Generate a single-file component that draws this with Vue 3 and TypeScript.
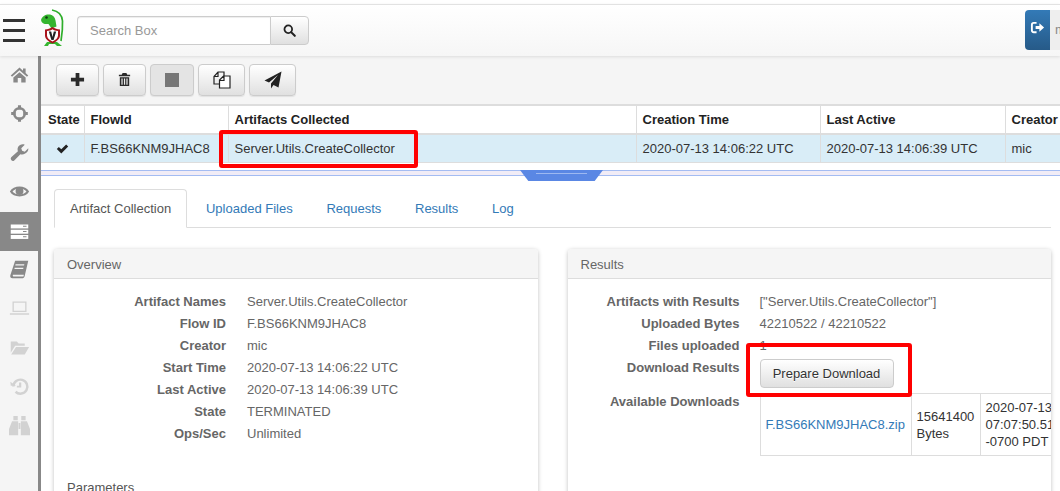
<script setup lang="ts">
const columns: string[] = ['State', 'FlowId', 'Artifacts Collected', 'Creation Time', 'Last Active', 'Creator']
const tabs: string[] = ['Uploaded Files', 'Requests', 'Results', 'Log']
const overview: [string, string][] = [
  ['Artifact Names', 'Server.Utils.CreateCollector'],
  ['Flow ID', 'F.BS66KNM9JHAC8'],
  ['Creator', 'mic'],
  ['Start Time', '2020-07-13 14:06:22 UTC'],
  ['Last Active', '2020-07-13 14:06:39 UTC'],
  ['State', 'TERMINATED'],
  ['Ops/Sec', 'Unlimited'],
]
const results: [string, string][] = [
  ['Artifacts with Results', '["Server.Utils.CreateCollector"]'],
  ['Uploaded Bytes', '42210522 / 42210522'],
  ['Files uploaded', '1'],
]
</script>

<template>
  <div class="app">
    <header class="nav">
      <div class="burger"><i></i><i></i><i></i></div>
      <svg class="logo" viewBox="0 0 24 38">
        <path d="M12 1c6 1 10 5 10.500 11 .3 7-.5 14-1.500 20" fill="none" stroke="#2fae2c" stroke-width="1.700" />
        <path d="M1 11c1-4 5-6 9-5.500 3 .5 5 3 5.500 6l1 6-5 2-3-4.500C5 15.500 1.500 14.500 1 11z" fill="#35b52f" />
        <circle cx="6.500" cy="8.500" r="1.300" fill="#0d3b0d" />
        <path d="M4 37l3-4h10l5 4h-5l-2-2H9l-1 2z" fill="#35b52f" />
        <path d="M5 20.500c3 0 5-1 7.500-2.500 2.500 1.500 4.500 2.500 7.500 2.500v6c0 3.500-3.500 6-7.500 8-4-2-7.500-4.500-7.500-8z" fill="#a9131c" />
        <path d="M7 22c2.500 0 4-.7 5.500-1.700 1.500 1 3 1.700 5.500 1.700v4.500c0 2.500-2.500 4.500-5.500 6-3-1.500-5.500-3.500-5.500-6z" fill="#fff" />
        <path d="M8.800 22.500h2.400l1.300 5.500 1.300-5.500h2.400l-2.600 8.500h-2.200z" fill="#222" />
      </svg>
      <div class="search">
        <input class="search-input" placeholder="Search Box" />
        <button class="search-btn" aria-label="Search">
          <svg viewBox="0 0 16 16" width="13" height="13"><circle cx="6.500" cy="6.500" r="4.700" fill="none" stroke="#222" stroke-width="2.200" /><path d="M10 10l4.500 4.500" stroke="#222" stroke-width="2.600" stroke-linecap="round" /></svg>
        </button>
      </div>
      <div class="user">
        <span class="logout">
          <svg viewBox="0 0 16 16" width="15" height="15"><path d="M7 3H4a2 2 0 0 0-2 2v6a2 2 0 0 0 2 2h3" fill="none" stroke="#fff" stroke-width="2" /><path d="M6 6.500h4V3.500l5 4.500-5 4.500v-3H6z" fill="#fff" /></svg>
        </span>
        <span class="username">mic</span>
      </div>
    </header>

    <div class="body">
      <aside class="side">
        <div class="side-item">
          <svg viewBox="0 0 24 24"><path d="M12 4 2 13l1.500 1.500L12 7l8.500 7.500L22 13l-3-2.700V5h-3v2.600z" /><path d="M5 15.500V21h5v-5h4v5h5v-5.500l-7-6z" /></svg>
        </div>
        <div class="side-item">
          <svg viewBox="0 0 24 24"><circle cx="12" cy="12" r="6" fill="none" stroke="#888" stroke-width="3" /><path d="M12 2.500v5M12 16.500v5M2.500 12h5M16.500 12h5" stroke="#888" stroke-width="3.500" /></svg>
        </div>
        <div class="side-item">
          <svg viewBox="0 0 24 24"><path d="M22 7l-4 4-3-1-1-3 4-4c-3-1-6 0-7.500 2.500-1 2-.8 3.500-.3 5L2.500 17.500A2.500 2.500 0 0 0 6 21l7-7c1.500.5 3.500.5 5.500-.8C21 11.500 22.500 9.500 22 7z" /></svg>
        </div>
        <div class="side-item">
          <svg viewBox="0 0 24 24"><path fill-rule="evenodd" d="M1 12c4-7.500 18-7.500 22 0-4 7.500-18 7.500-22 0zm3 0c3.500 4.500 12.500 4.500 16 0-3.500-4.500-12.500-4.500-16 0z" /><circle cx="12" cy="11.500" r="4.500" /></svg>
        </div>
        <div class="side-item active">
          <svg viewBox="0 0 24 24"><rect x="2" y="4" width="20" height="4.500" /><rect x="2" y="10" width="20" height="4.500" /><rect x="2" y="16" width="20" height="4.500" /><path d="M16 5.500h4v1h-4zM16 11.500h4v1h-4zM16 17.500h4v1h-4z" style="fill:#888" /></svg>
        </div>
        <div class="side-item">
          <svg viewBox="0 0 24 24"><path fill-rule="evenodd" d="M7 2h15l-4 17c-.4 2-1.500 3-3.500 3H4c-2 0-3-1.500-2.500-3.500zM7.500 6l-.3 1.500h10l.3-1.500zM6.500 10l-.3 1.500h10l.3-1.500zM4.500 18c-.5 1.500 0 2 1 2h11l.5-2z" /></svg>
        </div>
        <div class="side-item off">
          <svg viewBox="0 0 24 24"><path fill-rule="evenodd" d="M4 4h16v12H4zm1.500 1.500v9h13v-9zM1 17.500h22V19H1z" /></svg>
        </div>
        <div class="side-item off">
          <svg viewBox="0 0 24 24"><path d="M2 5h7l2 2.500h7V10H7l-5 8zM8 11.500h15L18 20H2.500z" /></svg>
        </div>
        <div class="side-item off">
          <svg viewBox="0 0 24 24"><path d="M5 12a8 8 0 1 1 2.500 6" fill="none" stroke="#d2d2d2" stroke-width="2.800" /><path d="M1.500 6.500 8 11H2zM11.500 7.500h2.500v5.500h-5v-2h2.500z" /></svg>
        </div>
        <div class="side-item off">
          <svg viewBox="0 0 24 24"><path d="M5 1h5v5H5zM14 1h5v5h-5zM3.500 7h7v16H0v-7zM13.500 7h7L24 16v7H13.500zM11 9h2v7h-2z" /></svg>
        </div>
      </aside>

      <main class="main">
        <div class="toolbar">
          <button class="tool w43" aria-label="New"><svg viewBox="0 0 16 16" width="15" height="15"><path d="M6 1h4v5h5v4h-5v5H6v-5H1V6h5z" fill="#2a2a2a" /></svg></button>
          <button class="tool w43" aria-label="Delete"><svg viewBox="0 0 16 16" width="15" height="15"><path d="M6 1h4l1 2h3v1.500H2V3h3zM3 5.500h10V15H3zm1.700 1.500v6.500h1.300V7zm2.700 0v6.500h1.300V7zm2.600 0v6.500h1.300V7z" fill="#2a2a2a" fill-rule="evenodd" /></svg></button>
          <button class="tool w44 disabled" aria-label="Stop"><span class="stop"></span></button>
          <button class="tool w47" aria-label="Copy"><svg viewBox="0 0 18 18" width="18" height="18"><path d="M7 1H5L1 5.500V13h5M5 1.500v4H1.500M7 1h4v4" fill="none" stroke="#222" stroke-width="1.200" /><path d="M6.500 17V9l4-4h6.500v12zM6.500 9.500H11V5" fill="#fff" stroke="#222" stroke-width="1.200" /></svg></button>
          <button class="tool w47" aria-label="Send"><svg viewBox="0 0 18 18" width="18" height="18"><path d="M17.500.5 14.500 16.500 9.500 14l-2.500 3.500v-5L14 4 5 11.500.5 9.500z" fill="#222" /></svg></button>
        </div>

        <table class="flows">
          <colgroup>
            <col class="c1" /><col class="c2" /><col class="c3" /><col class="c4" /><col class="c5" /><col class="c6" />
          </colgroup>
          <thead>
            <tr><th v-for="c in columns" :key="c">{{ c }}</th></tr>
          </thead>
          <tbody>
            <tr>
              <td class="state"><svg viewBox="0 0 16 16" width="13" height="13"><path d="M1 8.500 3.500 6l3 3 6-6L15 5.500 6.500 14z" fill="#222" /></svg></td>
              <td>F.BS66KNM9JHAC8</td>
              <td>Server.Utils.CreateCollector</td>
              <td>2020-07-13 14:06:22 UTC</td>
              <td>2020-07-13 14:06:39 UTC</td>
              <td>mic</td>
            </tr>
          </tbody>
        </table>

        <div class="splitter"><span class="handle"><i></i></span></div>

        <section class="pane">
          <nav class="tabs">
            <span class="tab current">Artifact Collection</span>
            <a v-for="t in tabs" :key="t" class="tab">{{ t }}</a>
          </nav>
          <div class="cards">
            <article class="card">
              <div class="card-head">Overview</div>
              <div class="card-body">
                <div class="dl">
                  <template v-for="r in overview" :key="r[0]">
                    <b>{{ r[0] }}</b><span>{{ r[1] }}</span>
                  </template>
                </div>
                <div class="params">Parameters</div>
              </div>
            </article>
            <article class="card">
              <div class="card-head">Results</div>
              <div class="card-body">
                <div class="dl right">
                  <template v-for="r in results" :key="r[0]">
                    <b>{{ r[0] }}</b><span>{{ r[1] }}</span>
                  </template>
                  <b>Download Results</b>
                  <span class="btn-cell"><button class="prepare">Prepare Download</button></span>
                  <b>Available Downloads</b>
                  <table class="downloads">
                    <tbody>
                      <tr>
                        <td class="zip"><a>F.BS66KNM9JHAC8.zip</a></td>
                        <td class="size">15641400 Bytes</td>
                        <td class="date">2020-07-13 07:07:50.517 -0700 PDT</td>
                      </tr>
                    </tbody>
                  </table>
                </div>
              </div>
            </article>
          </div>
        </section>
      </main>
    </div>

    <div class="mark mark-a"></div>
    <div class="mark mark-b"></div>
  </div>
</template>

<style>
html, body { margin: 0; height: 491px; overflow: hidden; background: #fff; }
</style>

<style scoped>
.app {
  position: relative; width: 1060px; height: 491px; overflow: hidden;
  padding-top: 4px; box-sizing: border-box; background: #fff;
  font: 13px/20px "Liberation Sans", Arial, sans-serif; color: #333;
  display: flex; flex-direction: column;
}
.nav {
  height: 52px; flex: none; box-sizing: border-box; border-top: 1px solid #e2e2e2;
  background: linear-gradient(#fff, #f6f6f6); display: flex; align-items: flex-start;
  box-shadow: 0 1px 3px rgba(0,0,0,.1); position: relative; z-index: 1;
}
.burger { width: 22px; margin: 14px 0 0 3px; display: flex; flex-direction: column; gap: 7px; }
.burger i { display: block; height: 3px; background: #333; }
.logo { width: 24px; height: 38px; margin: 4px 0 0 15px; }
.search { display: flex; margin: 11px 0 0 13px; height: 29px; }
.search-input {
  width: 193px; box-sizing: border-box; border: 1px solid #ccc; border-right: 0; border-radius: 4px 0 0 4px;
  padding: 0 12px; font: 13px "Liberation Sans", Arial, sans-serif; outline: 0; background: #fff;
  box-shadow: inset 0 1px 1px rgba(0,0,0,.075);
}
.search-input::placeholder { color: #999; opacity: 1; }
.search-btn {
  width: 39px; padding: 0; border: 1px solid #ccc; border-radius: 0 4px 4px 0;
  background: linear-gradient(#fff, #e0e0e0); display: flex; align-items: center; justify-content: center;
}
.user { margin: 5px 0 0 auto; display: flex; height: 40px; width: 35px; flex: none; }
.logout {
  width: 25px; flex: none; background: linear-gradient(#337ab7, #265a88); border-radius: 4px 0 0 4px;
  padding-top: 10px; box-sizing: border-box; display: flex; justify-content: center; align-items: flex-start;
}
.username { flex: 1; background: #eee; color: #888; padding: 10px 0 0 5px; overflow: hidden; }
.body { flex: 1; display: flex; min-height: 0; }
.side { width: 38px; flex: none; background: #f5f5f5; border-right: 3px solid #888; }
.side-item { height: 39px; display: flex; align-items: center; justify-content: center; box-sizing: border-box; padding-bottom: 3px; }
.side-item svg { width: 21px; height: 21px; fill: #888; }
.side-item.active { background: #888; padding-bottom: 0; }
.side-item.active svg { fill: #fff; }
.side-item.off svg { fill: #d2d2d2; }
.main { flex: 1; min-width: 0; display: flex; flex-direction: column; }
.toolbar {
  height: 48px; flex: none; background: #f5f5f5; padding: 8px 0 0 15px; box-sizing: border-box;
  display: flex; gap: 4px; align-items: flex-start;
}
.tool {
  height: 32px; padding: 0; border: 1px solid #ccc; border-radius: 4px;
  background: linear-gradient(#fff, #e0e0e0); display: flex; align-items: center; justify-content: center;
  box-shadow: 0 1px 1px rgba(0,0,0,.08);
}
.tool svg { margin-top: -1px; }
.w43 { width: 43px; } .w44 { width: 44px; } .w47 { width: 47px; }
.tool.disabled { background: #e4e4e4; }
.stop { width: 14px; height: 14px; background: #777; margin-top: -1px; }
.flows {
  border-collapse: collapse; table-layout: fixed; width: 1019px; flex: none;
  border-top: 2px solid #ddd;
}
.c1 { width: 43px; } .c2 { width: 144px; } .c3 { width: 408px; } .c4 { width: 184px; } .c5 { width: 185px; } .c6 { width: 55px; }
.flows th {
  height: 29px; padding: 0 5px 0 6px; text-align: left; font-weight: 700; color: #222; background: #fff;
  border-left: 1px solid #ddd; border-bottom: 2px solid #ddd; white-space: nowrap; box-sizing: border-box;
}
.flows td {
  height: 27px; padding: 0 5px 0 6px; background: #d9edf7; border-left: 1px solid #ddd; border-bottom: 1px solid #ddd;
  white-space: nowrap;
}
.flows th:first-child { border-left: 0; padding-left: 7px; padding-right: 0; }
.flows td:first-child { border-left: 0; padding: 0 5px; }
.flows td.state { text-align: center; }
.state svg { vertical-align: -2px; }
.splitter {
  position: relative; flex: none; height: 6px; margin-top: 7px; box-sizing: border-box;
  border-top: 1px solid #a4bcf2; border-bottom: 1px solid #a4bcf2; background: #f1ecf6;
}
.handle {
  position: absolute; left: 479px; top: -1px; width: 83px; height: 11px;
  background: #5a87e4; clip-path: polygon(0 0, 100% 0, 90% 100%, 10% 100%);
}
.handle i { position: absolute; left: 16px; right: 16px; top: 3px; height: 1px; background: #9db8f1; }
.pane { padding: 13px 0 0 13px; flex: 1; min-height: 0; }
.tabs { display: flex; gap: 3.700px; width: 997px; height: 39px; box-sizing: border-box; border-bottom: 1px solid #ddd; }
.tab { padding: 10px 15px 0; height: 39px; box-sizing: border-box; color: #337ab7; }
.tab.current {
  color: #555; background: #fff; border: 1px solid #ddd; border-bottom-color: #fff; margin-right: .3px;
  border-radius: 4px 4px 0 0; padding: 9px 15px 0; width: 133px; text-align: center; white-space: nowrap;
}
.cards { display: flex; gap: 30px; margin-top: 21px; width: 997px; }
.card {
  flex: 1; min-width: 0; height: 300px; border-radius: 4px; background: #fff; overflow: hidden;
  box-shadow: 0 1px 4px rgba(0,0,0,.25);
}
.card-head {
  height: 30px; box-sizing: border-box; background: #f5f5f5; border-bottom: 1px solid #ddd;
  padding: 6px 13px 0; color: #666;
}
.card-body { padding: 12px 0 0; }
.dl { display: grid; grid-template-columns: 172px 1fr; column-gap: 21px; line-height: 22px; color: #666; }
.dl b { text-align: right; color: #666; font-weight: 700; white-space: nowrap; }
.dl span { white-space: nowrap; }
.dl.right { grid-template-columns: 172px 1fr; column-gap: 20px; }
.params { margin: 33px 0 0 13px; color: #555; }
.btn-cell { height: 34px; }
.prepare {
  width: 134px; height: 29px; margin-top: 2px; padding: 0; border: 1px solid #ccc; border-radius: 4px;
  background: linear-gradient(#fff, #e0e0e0); color: #333; font: 13px "Liberation Sans", Arial, sans-serif;
  text-shadow: 0 1px 0 #fff;
}
.downloads { border-collapse: collapse; width: 340px; table-layout: fixed; line-height: 17px; color: #333; border-top: 1px solid #ddd; border-bottom: 1px solid #ddd; margin-top: 2px; }
.downloads td { padding: 5px; border-left: 1px solid #ddd; box-sizing: border-box; }
.zip { width: 151px; white-space: nowrap; }
.zip a { color: #337ab7; }
.size { width: 69px; }
.date { width: 120px; }
.mark { position: absolute; box-sizing: border-box; border: 4px solid #f00; border-radius: 3px; pointer-events: none; }
.mark-a { left: 219px; top: 130px; width: 199px; height: 38px; }
.mark-b { left: 746px; top: 343px; width: 166px; height: 54px; }
</style>
